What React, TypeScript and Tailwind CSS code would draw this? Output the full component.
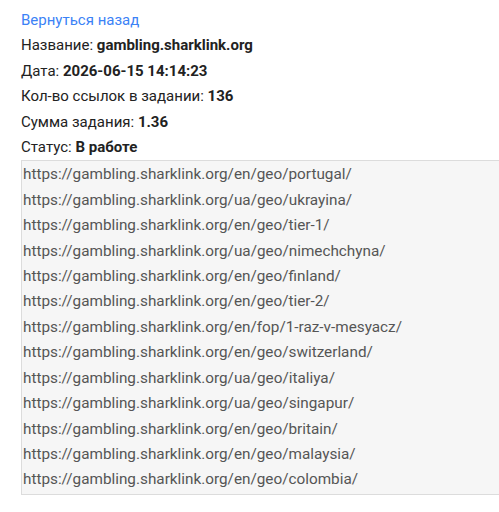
const urls = [
  'https://gambling.sharklink.org/en/geo/portugal/',
  'https://gambling.sharklink.org/ua/geo/ukrayina/',
  'https://gambling.sharklink.org/en/geo/tier-1/',
  'https://gambling.sharklink.org/ua/geo/nimechchyna/',
  'https://gambling.sharklink.org/en/geo/finland/',
  'https://gambling.sharklink.org/en/geo/tier-2/',
  'https://gambling.sharklink.org/en/fop/1-raz-v-mesyacz/',
  'https://gambling.sharklink.org/en/geo/switzerland/',
  'https://gambling.sharklink.org/ua/geo/italiya/',
  'https://gambling.sharklink.org/ua/geo/singapur/',
  'https://gambling.sharklink.org/en/geo/britain/',
  'https://gambling.sharklink.org/en/geo/malaysia/',
  'https://gambling.sharklink.org/en/geo/colombia/',
];

export default function App() {
  return (
    <div className="w-[499px] h-[512px] overflow-hidden bg-white pl-[21px] pt-[8px] text-[15px] leading-[25.4px] text-[#222] font-['Roboto',sans-serif]">
      <a href="#" className="block text-[#3b82f6]">Вернуться назад</a>
      <div>Название: <b className="font-bold">gambling.sharklink.org</b></div>
      <div>Дата: <b className="font-bold">2026-06-15 14:14:23</b></div>
      <div>Кол-во ссылок в задании: <b className="font-bold">136</b></div>
      <div>Сумма задания: <b className="font-bold">1.36</b></div>
      <div>Статус: <b className="font-bold">В работе</b></div>
      <div className="w-[600px] border border-[#dcdcdc] bg-[#f6f6f6] px-px py-px text-[#555] text-[15.3px]">
        {urls.map((u) => (
          <div key={u}>{u}</div>
        ))}
      </div>
    </div>
  );
}
